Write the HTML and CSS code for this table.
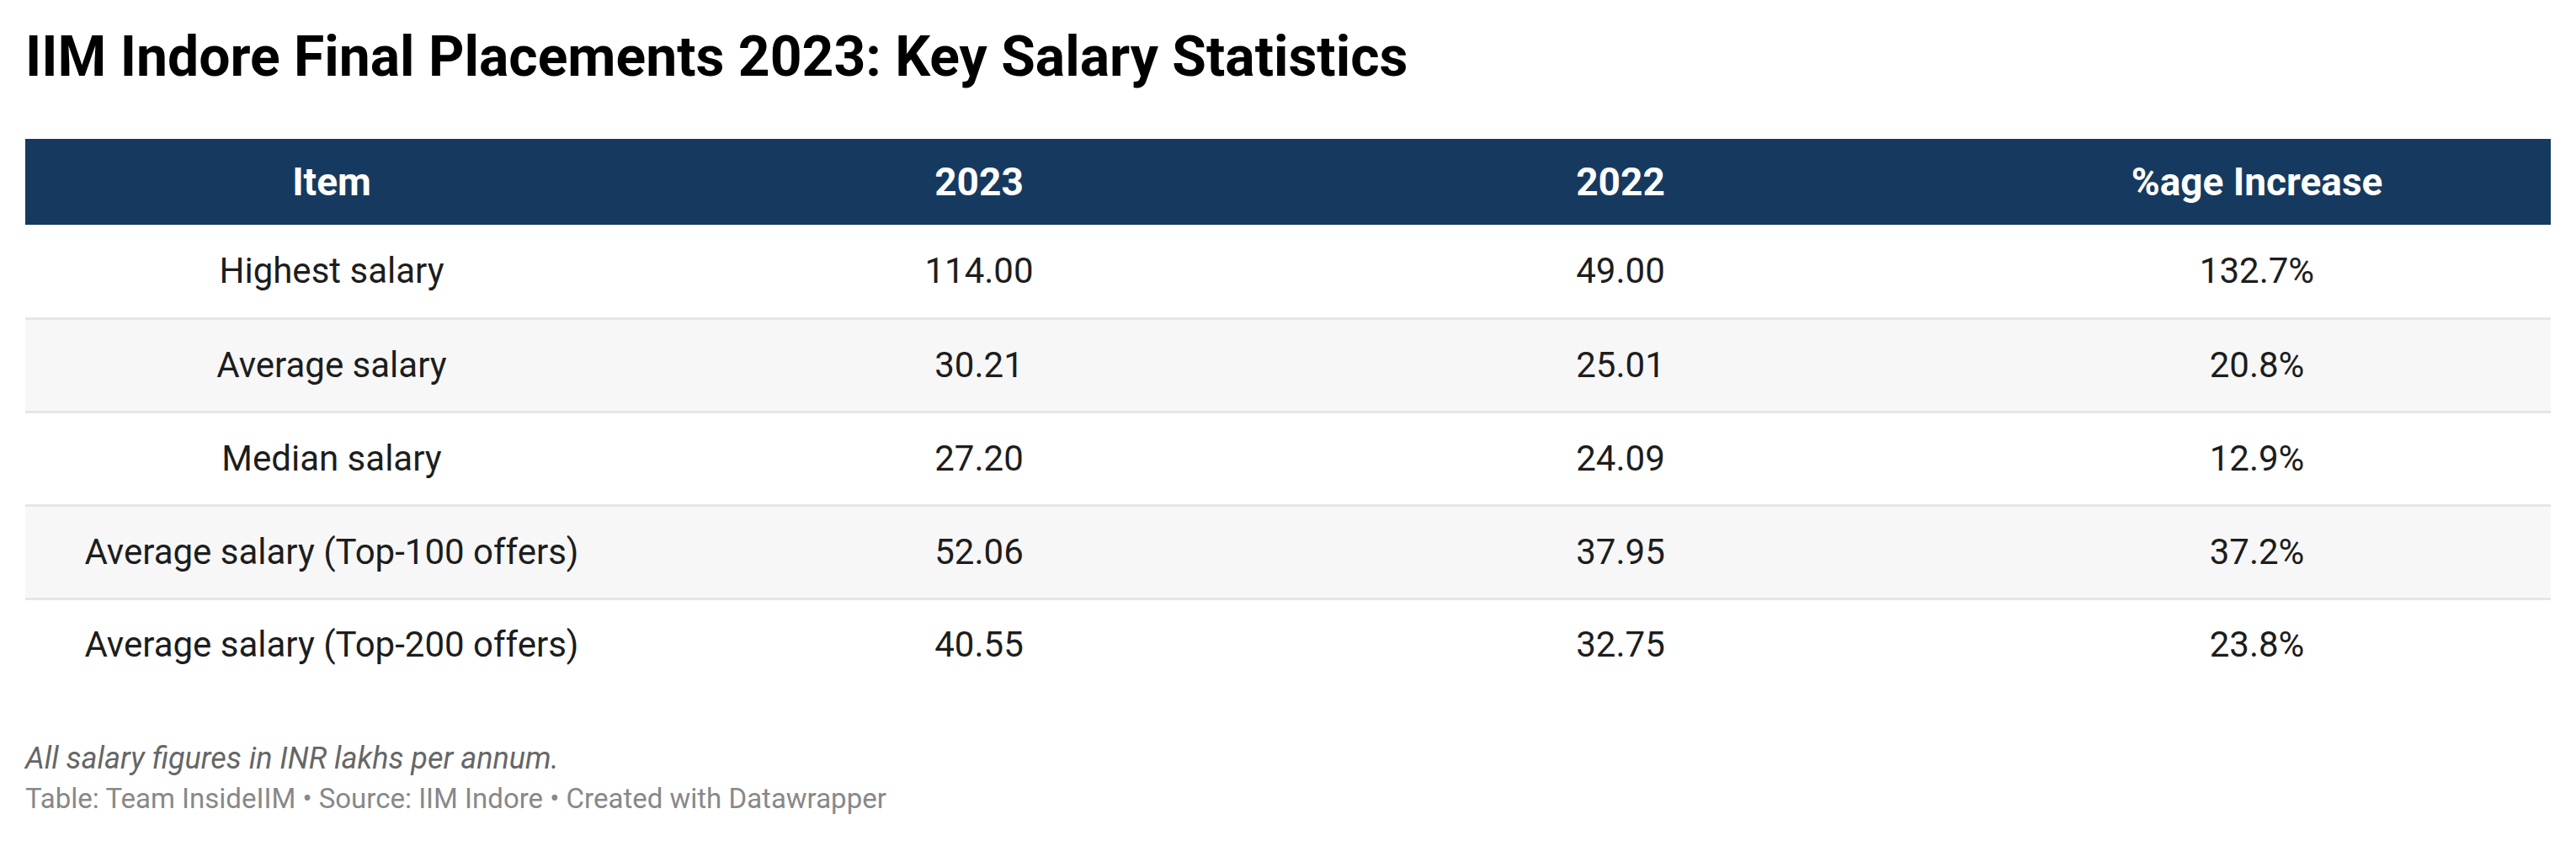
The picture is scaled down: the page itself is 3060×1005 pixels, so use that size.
FILE: index.html
```html
<!DOCTYPE html>
<html lang="en">
<head>
<meta charset="utf-8">
<title>IIM Indore Final Placements 2023: Key Salary Statistics</title>
<link rel="stylesheet" href="styles.css">
</head>
<body>
<div class="chart">
  <h1 class="title">IIM Indore Final Placements 2023: Key Salary Statistics</h1>
  <table class="data">
    <colgroup>
      <col class="c1"><col class="c2"><col class="c3"><col class="c4">
    </colgroup>
    <thead>
      <tr><th>Item</th><th>2023</th><th>2022</th><th class="last">%age Increase</th></tr>
    </thead>
    <tbody>
      <tr><td>Highest salary</td><td>114.00</td><td>49.00</td><td class="last">132.7%</td></tr>
      <tr><td>Average salary</td><td>30.21</td><td>25.01</td><td class="last">20.8%</td></tr>
      <tr><td>Median salary</td><td>27.20</td><td>24.09</td><td class="last">12.9%</td></tr>
      <tr><td>Average salary (Top-100 offers)</td><td>52.06</td><td>37.95</td><td class="last">37.2%</td></tr>
      <tr><td>Average salary (Top-200 offers)</td><td>40.55</td><td>32.75</td><td class="last">23.8%</td></tr>
    </tbody>
  </table>
  <div class="notes">
    <p class="note">All salary figures in INR lakhs per annum.</p>
    <p class="source">Table: Team InsideIIM • Source: IIM Indore • Created with Datawrapper</p>
  </div>
</div>
</body>
</html>
```
FILE: styles.css
```css
* { box-sizing: border-box; }
html, body { margin: 0; padding: 0; background: #ffffff; }
body { font-family: Roboto, "Liberation Sans", Arial, sans-serif; color: #1d1d1d; }

.chart { padding: 28px 30px 0 30px; }

.title {
  margin: 0;
  font-size: 66px;
  line-height: 79px;
  font-weight: 700;
  color: #000000;
}

.data {
  margin-top: 58px;
  width: 3000px;
  border-collapse: collapse;
  table-layout: fixed;
}
.c1 { width: 728px; }
.c2 { width: 810px; }
.c3 { width: 714px; }
.c4 { width: 748px; }

.data th {
  height: 102px;
  padding: 0;
  background: #163a5f;
  color: #ffffff;
  font-size: 46px;
  font-weight: 700;
  text-align: center;
  vertical-align: middle;
}
.data td {
  height: 111px;
  padding: 0;
  font-size: 42px;
  font-weight: 400;
  text-align: center;
  vertical-align: middle;
  color: #1d1d1d;
  border-bottom: 3px solid #e6e6e6;
}
.data tbody tr:nth-child(even) td { background: #f7f7f7; }
.data tbody tr:last-child td { border-bottom: none; height: 108px; }
.data .last { padding-left: 50px; }

.notes { margin-top: 58px; }
.notes p { margin: 0; line-height: 48px; }
.note { font-size: 36px; font-style: italic; color: #666666; }
.source { font-size: 33px; color: #888888; margin-top: 18px; }
```
